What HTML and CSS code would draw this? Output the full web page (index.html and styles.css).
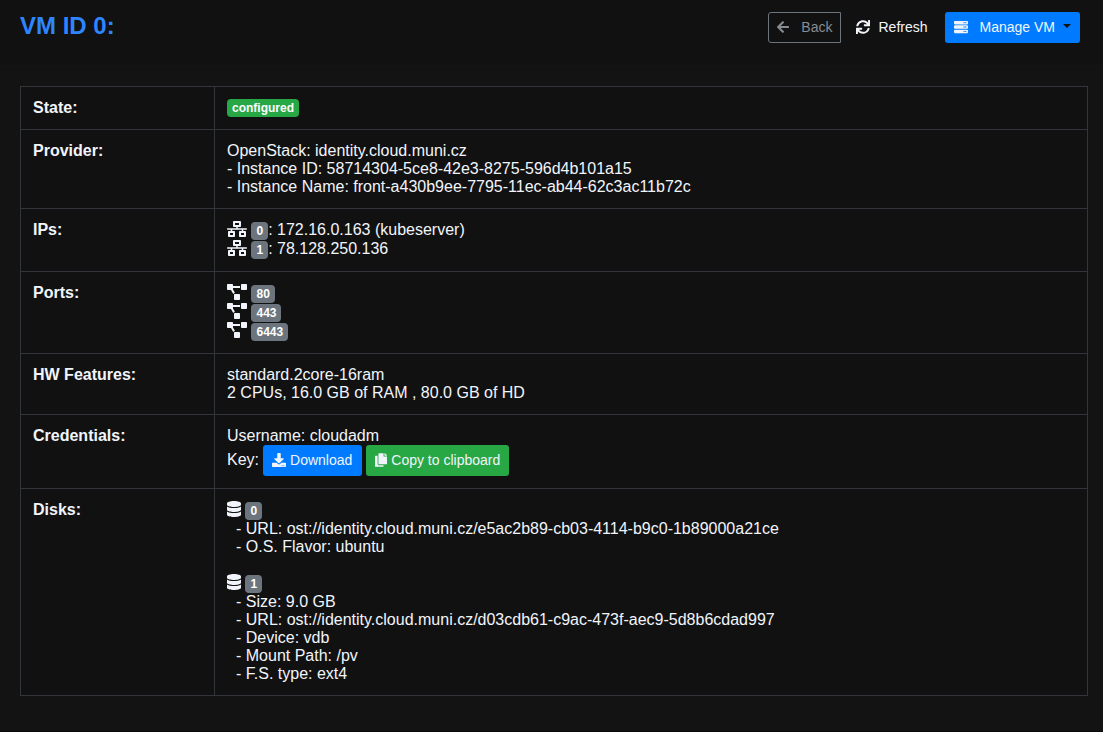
FILE: index.html
```html
<!DOCTYPE html>
<html lang="en">
<head>
    <meta charset="UTF-8">
    <meta name="viewport" content="width=device-width, initial-scale=1.0">
    <title>VM Info</title>
    <link rel="stylesheet" href="styles.css">
</head>
<body>
    <!-- Icon symbols -->
    <svg class="symbols" aria-hidden="true">
        <symbol id="arrow-left" viewBox="0 0 448 512"><path d="M257.5 445.1l-22.2 22.2c-9.4 9.4-24.6 9.4-33.9 0L7 273c-9.4-9.4-9.4-24.6 0-33.9L201.4 44.7c9.4-9.4 24.6-9.4 33.9 0l22.2 22.2c9.5 9.5 9.3 25-.4 34.3L136.600 216H424c13.300 0 24 10.700 24 24v32c0 13.300-10.700 24-24 24H136.600l120.500 114.800c9.800 9.300 10 24.800.4 34.300z"/></symbol>
        <symbol id="sync" viewBox="0 0 512 512"><path d="M440.650 12.570l4 82.770A247.160 247.160 0 0 0 255.830 8C134.730 8 33.910 94.920 12.290 209.820A12 12 0 0 0 24.090 224h49.050a12 12 0 0 0 11.670-9.260 175.910 175.910 0 0 1 317-56.940l-101.460-4.860a12 12 0 0 0-12.570 12v47.410a12 12 0 0 0 12 12H500a12 12 0 0 0 12-12V12a12 12 0 0 0-12-12h-47.370a12 12 0 0 0-11.980 12.570zM255.830 432a175.610 175.610 0 0 1-146-77.800l101.800 4.870a12 12 0 0 0 12.570-12v-47.400a12 12 0 0 0-12-12H12a12 12 0 0 0-12 12V500a12 12 0 0 0 12 12h47.350a12 12 0 0 0 12-12.600l-4.150-82.570A247.170 247.170 0 0 0 255.830 504c121.110 0 221.930-86.920 243.550-201.820a12 12 0 0 0-11.800-14.180h-49.050a12 12 0 0 0-11.670 9.260A175.860 175.860 0 0 1 255.830 432z"/></symbol>
        <symbol id="server" viewBox="0 0 512 512"><path fill-rule="evenodd" d="M480 160H32c-17.700 0-32-14.300-32-32V64c0-17.700 14.300-32 32-32h448c17.700 0 32 14.300 32 32v64c0 17.700-14.300 32-32 32zm-48-88a24 24 0 1 0 0 48 24 24 0 0 0 0-48zm-64 0a24 24 0 1 0 0 48 24 24 0 0 0 0-48zm112 248H32c-17.700 0-32-14.300-32-32v-64c0-17.700 14.300-32 32-32h448c17.700 0 32 14.300 32 32v64c0 17.700-14.300 32-32 32zm-48-88a24 24 0 1 0 0 48 24 24 0 0 0 0-48zm-64 0a24 24 0 1 0 0 48 24 24 0 0 0 0-48zm112 248H32c-17.700 0-32-14.300-32-32v-64c0-17.700 14.300-32 32-32h448c17.700 0 32 14.300 32 32v64c0 17.700-14.300 32-32 32zm-48-88a24 24 0 1 0 0 48 24 24 0 0 0 0-48zm-64 0a24 24 0 1 0 0 48 24 24 0 0 0 0-48z"/></symbol>
        <symbol id="network" viewBox="0 0 640 512"><path fill-rule="evenodd" d="M640 264v-16c0-8.840-7.160-16-16-16H344v-40h72c17.670 0 32-14.330 32-32V32c0-17.670-14.330-32-32-32H224c-17.670 0-32 14.330-32 32v128c0 17.670 14.330 32 32 32h72v40H16c-8.840 0-16 7.160-16 16v16c0 8.840 7.160 16 16 16h104v40H64c-17.670 0-32 14.330-32 32v128c0 17.670 14.330 32 32 32h160c17.670 0 32-14.330 32-32V352c0-17.670-14.330-32-32-32h-56v-40h304v40h-56c-17.670 0-32 14.330-32 32v128c0 17.670 14.330 32 32 32h160c17.670 0 32-14.330 32-32V352c0-17.670-14.330-32-32-32h-56v-40h104c8.840 0 16-7.160 16-16zM256 128V64h128v64H256zm-64 320H96v-64h96v64zm352 0h-96v-64h96v64z"/></symbol>
        <symbol id="diagram" viewBox="0 0 640 512"><path d="M384 320H256c-17.670 0-32 14.330-32 32v128c0 17.670 14.330 32 32 32h128c17.670 0 32-14.330 32-32V352c0-17.670-14.330-32-32-32zM192 32c0-17.670-14.330-32-32-32H32C14.330 0 0 14.330 0 32v128c0 17.670 14.330 32 32 32h95.720l73.160 128.040C211.980 300.980 232.400 288 256 288h.28L192 175.510V128h224V64H192V32zM608 0H480c-17.670 0-32 14.330-32 32v128c0 17.670 14.330 32 32 32h128c17.670 0 32-14.330 32-32V32c0-17.670-14.330-32-32-32z"/></symbol>
        <symbol id="download" viewBox="0 0 512 512"><path fill-rule="evenodd" d="M216 0h80c13.300 0 24 10.700 24 24v168h87.700c17.800 0 26.700 21.500 14.100 34.100L269.700 378.300c-7.500 7.500-19.800 7.500-27.300 0L90.100 226.100c-12.600-12.600-3.700-34.100 14.100-34.100H192V24c0-13.300 10.700-24 24-24zm296 376v112c0 13.300-10.700 24-24 24H24c-13.300 0-24-10.700-24-24V376c0-13.300 10.700-24 24-24h146.700l49 49c20.100 20.100 52.500 20.100 72.600 0l49-49H488c13.300 0 24 10.700 24 24zm-124 88c0-11-9-20-20-20s-20 9-20 20 9 20 20 20 20-9 20-20zm64 0c0-11-9-20-20-20s-20 9-20 20 9 20 20 20 20-9 20-20z"/></symbol>
        <symbol id="copy" viewBox="0 0 448 512"><path d="M320 448v40c0 13.255-10.745 24-24 24H24c-13.255 0-24-10.745-24-24V120c0-13.255 10.745-24 24-24h72v296c0 30.879 25.121 56 56 56h168zm0-344V0H152c-13.255 0-24 10.745-24 24v368c0 13.255 10.745 24 24 24h272c13.255 0 24-10.745 24-24V128H344c-13.200 0-24-10.800-24-24zm120.971-31.029L375.029 7.029A24 24 0 0 0 358.059 0H352v96h96v-6.059a24 24 0 0 0-7.029-16.970z"/></symbol>
        <symbol id="database" viewBox="0 0 448 512"><path d="M448 73.143v45.714C448 159.143 347.667 192 224 192S0 159.143 0 118.857V73.143C0 32.857 100.333 0 224 0s224 32.857 224 73.143zM448 176v102.857C448 319.143 347.667 352 224 352S0 319.143 0 278.857V176c48.125 33.143 136.208 48.572 224 48.572S399.874 209.143 448 176zm0 160v102.857C448 479.143 347.667 512 224 512S0 479.143 0 438.857V336c48.125 33.143 136.208 48.572 224 48.572S399.874 369.143 448 336z"/></symbol>
    </svg>

    <header class="topbar">
        <h1>VM ID 0:</h1>
        <div class="actions">
            <a href="#" class="btn btn-outline"><svg class="icon narrow"><use href="#arrow-left"/></svg>Back</a>
            <a href="#" class="btn btn-plain"><svg class="icon"><use href="#sync"/></svg>Refresh</a>
            <button type="button" class="btn btn-primary btn-menu"><svg class="icon"><use href="#server"/></svg>Manage VM<span class="caret"></span></button>
        </div>
    </header>

    <main>
        <table class="vm-table">
            <tbody>
                <tr>
                    <th scope="row">State:</th>
                    <td><span class="badge badge-success">configured</span></td>
                </tr>
                <tr>
                    <th scope="row">Provider:</th>
                    <td>
                        OpenStack: identity.cloud.muni.cz<br>
                        - Instance ID: 58714304-5ce8-42e3-8275-596d4b101a15<br>
                        - Instance Name: front-a430b9ee-7795-11ec-ab44-62c3ac11b72c
                    </td>
                </tr>
                <tr>
                    <th scope="row">IPs:</th>
                    <td>
                        <div class="item"><svg class="icon wide"><use href="#network"/></svg> <span class="badge">0</span>: 172.16.0.163 (kubeserver)</div>
                        <div class="item"><svg class="icon wide"><use href="#network"/></svg> <span class="badge">1</span>: 78.128.250.136</div>
                    </td>
                </tr>
                <tr>
                    <th scope="row">Ports:</th>
                    <td>
                        <div class="item"><svg class="icon wide"><use href="#diagram"/></svg> <span class="badge">80</span></div>
                        <div class="item"><svg class="icon wide"><use href="#diagram"/></svg> <span class="badge">443</span></div>
                        <div class="item"><svg class="icon wide"><use href="#diagram"/></svg> <span class="badge">6443</span></div>
                    </td>
                </tr>
                <tr>
                    <th scope="row">HW Features:</th>
                    <td>
                        standard.2core-16ram<br>
                        2 CPUs, 16.0 GB of RAM , 80.0 GB of HD
                    </td>
                </tr>
                <tr>
                    <th scope="row">Credentials:</th>
                    <td>
                        Username: cloudadm
                        <div class="key">
                            <span>Key:</span>
                            <a href="#" class="btn btn-primary"><svg class="icon"><use href="#download"/></svg>Download</a>
                            <button type="button" class="btn btn-success"><svg class="icon narrow"><use href="#copy"/></svg>Copy to clipboard</button>
                        </div>
                    </td>
                </tr>
                <tr>
                    <th scope="row">Disks:</th>
                    <td>
                        <div class="item"><svg class="icon disk"><use href="#database"/></svg> <span class="badge">0</span></div>
                        <div class="details">
                            - URL: ost://identity.cloud.muni.cz/e5ac2b89-cb03-4114-b9c0-1b89000a21ce<br>
                            - O.S. Flavor: ubuntu
                        </div>
                        <br>
                        <div class="item"><svg class="icon disk"><use href="#database"/></svg> <span class="badge">1</span></div>
                        <div class="details">
                            - Size: 9.0 GB<br>
                            - URL: ost://identity.cloud.muni.cz/d03cdb61-c9ac-473f-aec9-5d8b6cdad997<br>
                            - Device: vdb<br>
                            - Mount Path: /pv<br>
                            - F.S. type: ext4
                        </div>
                    </td>
                </tr>
            </tbody>
        </table>
    </main>
</body>
</html>
```
FILE: styles.css
```css
* {
    box-sizing: border-box;
}

body {
    margin: 0;
    min-height: 100vh;
    background-color: #131313;
    border-bottom: 1px solid #0c0709;
    color: #f1f5fb;
    font-family: "Liberation Sans", Arial, sans-serif;
    font-size: 16px;
    line-height: 18px;
}

.symbols {
    display: none;
}

/* Header */
.topbar {
    display: flex;
    justify-content: space-between;
    align-items: flex-start;
    height: 66px;
    padding: 12px 23px 12px 20px;
    background-color: #111;
    border-bottom: 1px solid #141414;
}

h1 {
    margin: 0;
    color: #2e86ff;
    font-size: 24px;
    line-height: 28px;
}

.actions {
    display: flex;
    gap: 6px;
}

/* Icons */
.icon {
    width: 16px;
    height: 16px;
    fill: currentColor;
    vertical-align: -2px;
}

.icon.wide {
    width: 20px;
}

.icon.disk {
    width: 14px;
}

/* Buttons */
.btn {
    display: inline-flex;
    align-items: center;
    padding: 4px 8px 5px;
    border: 1px solid transparent;
    border-radius: 3px;
    background-color: transparent;
    color: #f1f5fb;
    font-family: inherit;
    font-size: 14px;
    line-height: 20px;
    text-decoration: none;
    cursor: pointer;
}

.btn .icon {
    width: 14px;
    height: 14px;
    margin-right: 4px;
}

.btn .icon.narrow {
    width: 12px;
}

.actions .btn .icon {
    margin-right: 8px;
}

.actions .btn-outline .icon,
.actions .btn-menu .icon {
    margin-right: 12px;
}

.btn-outline {
    border-color: #6c757d;
    border-radius: 3px 0 0 3px;
    color: #868c92;
}

.btn-plain {
    padding-right: 10px;
}

.btn-primary {
    background-color: #007bff;
}

.btn-success {
    background-color: #28a745;
}

.caret {
    margin-left: 8px;
    margin-bottom: 2px;
    border-top: 4px solid #111;
    border-left: 4px solid transparent;
    border-right: 4px solid transparent;
}

/* VM info table */
main {
    padding: 20px 15px 35px 20px;
}

.vm-table {
    width: 100%;
    border-collapse: collapse;
    background-color: #111;
}

.vm-table th,
.vm-table td {
    padding: 12px;
    border: 1px solid #323539;
    text-align: left;
    vertical-align: top;
}

.vm-table th {
    width: 194px;
}

.badge {
    display: inline-block;
    padding: 3px 5px;
    border-radius: 4px;
    background-color: #6c757d;
    color: #fff;
    font-size: 12px;
    font-weight: bold;
    line-height: 12px;
    vertical-align: baseline;
}

.badge-success {
    background-color: #28a745;
    vertical-align: top;
}

.key {
    display: flex;
    gap: 4px;
}

.key span {
    line-height: 29px;
}

.key .btn-primary {
    padding-right: 9px;
}

.details {
    padding-left: 9px;
}
```
